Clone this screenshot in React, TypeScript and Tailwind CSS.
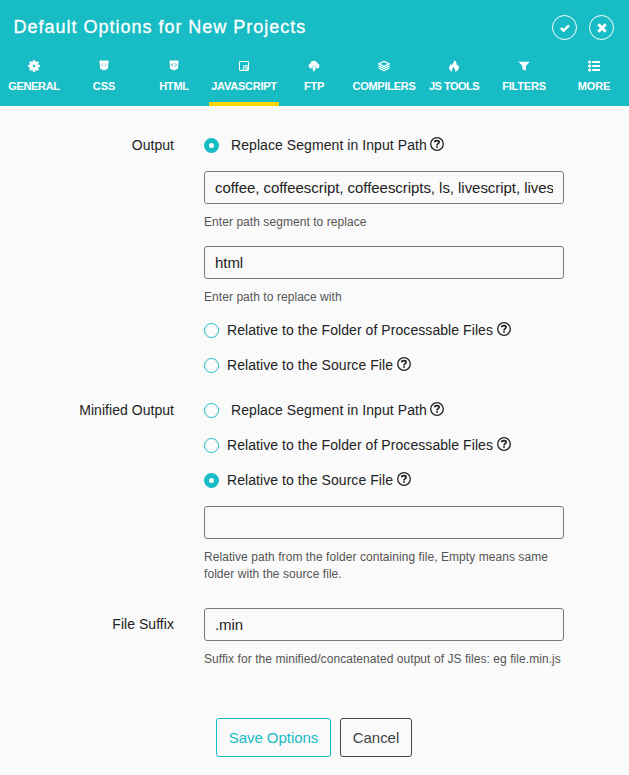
import type { ReactNode } from "react";

const Svg = ({ children }: { children: ReactNode }) => (
  <svg viewBox="0 0 12 12" className="h-3 w-3" fill="currentColor">
    {children}
  </svg>
);

const Shield = ({ strong }: { strong?: boolean }) => (
  <Svg>
    <path d="M1.500.5h9l-.5 8L6 10.500 2 8.500z" />
    <path
      d="M5 3.300 3.500 5 5 6.700M7 3.300 8.500 5 7 6.700"
      fill="none"
      stroke="#18bcc4"
      strokeWidth={strong ? 0.9 : 0.5}
    />
  </Svg>
);

const tabs: { label: string; icon: ReactNode; active?: boolean; spacing: string }[] = [
  {
    label: "GENERAL",
    spacing: "tracking-[-0.35px]",
    icon: (
      <Svg>
        <path
          d="M6 .2v11.600M.2 6h11.600M1.900 1.900l8.200 8.200M10.100 1.900l-8.200 8.200"
          stroke="currentColor"
          strokeWidth="2.500"
        />
        <circle cx="6" cy="6" r="4.500" />
        <circle cx="6" cy="6" r="1.200" fill="#18bcc4" />
      </Svg>
    ),
  },
  { label: "CSS", icon: <Shield />, spacing: "tracking-[-0.1px]" },
  { label: "HTML", icon: <Shield strong />, spacing: "tracking-[-0.2px]" },
  {
    label: "JAVASCRIPT",
    active: true,
    spacing: "tracking-[-0.25px]",
    icon: (
      <Svg>
        <rect x="1.500" y="1.500" width="9" height="9" rx=".5" fill="none" stroke="currentColor" strokeWidth="1" />
        <path
          d="M5.900 5v3.500q0 .8-.8.8h-.9M9.900 5.500H8.200q-.6 0-.6.900t.6.900h.7q.7 0 .7 1t-.7 1H7.100"
          fill="none"
          stroke="currentColor"
          strokeWidth="1.100"
        />
      </Svg>
    ),
  },
  {
    label: "FTP",
    spacing: "tracking-[-0.3px]",
    icon: (
      <Svg>
        <path d="M2.900 8.500A2.600 2.600 0 0 1 2.100 3.600a3.900 3.900 0 0 1 7.400-.3 2.650 2.650 0 0 1-.2 5.200z" />
        <path d="M6 5.500 3.400 8.300h1.300V11.300h2.600V8.300h1.300z" stroke="#18bcc4" strokeWidth=".5" />
      </Svg>
    ),
  },
  {
    label: "COMPILERS",
    spacing: "tracking-[-0.27px]",
    icon: (
      <Svg>
        <path
          d="M6 1.400 11.300 3.800 6 6.200.7 3.800zM.5 5.900l5.500 2.500 5.500-2.500M.5 8l5.500 2.500L11.500 8"
          fill="none"
          stroke="currentColor"
          strokeWidth="1.250"
        />
      </Svg>
    ),
  },
  {
    label: "JS TOOLS",
    spacing: "tracking-[-0.5px]",
    icon: (
      <Svg>
        <path d="M6.300.2c.3 2-2.300 3-2.100 5.200L3 4C1.500 5.600.9 7 1.200 8.500c.3 1.600 1.500 2.700 3 3.200-.9-2 .4-3.400 1.600-4.700.2 1.300 2 2.700 1.400 4.700 3.600-1 4.700-4.500 2.600-7.200-.2.900-.5 1.400-1 1.700C9 3.700 8.400 1.400 6.300.2z" />
      </Svg>
    ),
  },
  {
    label: "FILTERS",
    spacing: "tracking-[-0.2px]",
    icon: (
      <Svg>
        <path d="M.4 1.800h11.200L7.900 6v4.800L4.400 9.300V6z" />
      </Svg>
    ),
  },
  {
    label: "MORE",
    spacing: "tracking-[-0.15px]",
    icon: (
      <Svg>
        <path d="M4.200 1H12v2H4.200zM4.200 5H12v2H4.200zM4.200 9H12v2H4.200z" />
        <circle cx="1.600" cy="2" r="1.600" />
        <circle cx="1.600" cy="6" r="1.600" />
        <circle cx="1.600" cy="10" r="1.600" />
      </Svg>
    ),
  },
];

const Help = () => (
  <svg viewBox="0 0 14 14" className="ml-[3.5px] mt-[9px] h-[14px] w-[14px] shrink-0 self-start" fill="none" stroke="#222">
    <circle cx="7" cy="7" r="6.300" strokeWidth="1.300" />
    <path d="M4.700 5.200C4.800 3.200 9.100 3.200 9.100 5.200 9.100 6.700 7 6.600 7 8.400" strokeWidth="1.700" />
    <path d="M7 9.200v1.600" strokeWidth="1.800" />
  </svg>
);

function Radio({ children, checked, wide }: { children: string; checked?: boolean; wide?: boolean }) {
  return (
    <div className="flex h-[35px] items-center">
      <span
        className={`h-[15px] w-[15px] shrink-0 rounded-full border-[#18bcc4] ${
          checked ? "border-[5px] bg-white" : "border"
        }`}
      />
      <span className={`whitespace-nowrap pb-[2px] text-sm tracking-[0.07px] ${wide ? "ml-3" : "ml-2"}`}>
        {children}
      </span>
      <Help />
    </div>
  );
}

const Field = ({ value }: { value: string }) => (
  <input
    readOnly
    defaultValue={value}
    className="block h-[33px] w-[360px] rounded-[3px] border border-[#7b7b7b] bg-transparent px-[10px] text-[15px] tracking-[-0.05px] text-[#222] outline-none"
  />
);

const Hint = ({ children }: { children: ReactNode }) => (
  <p className="whitespace-nowrap text-xs leading-[17px] tracking-[0.06px] text-[#555]">{children}</p>
);

const Label = ({ children }: { children: string }) => (
  <div className="w-[174px] shrink-0 text-right text-sm leading-[35px] tracking-[0.04px]">{children}</div>
);

export default function App() {
  return (
    <main className="h-[775px] w-[629px] overflow-hidden bg-[#fafafa] font-['Liberation_Sans',Arial,sans-serif] text-[#222]">
      <header className="h-[106px] overflow-hidden bg-[#18bcc4] text-white">
        <div className="flex h-[55px] items-center justify-between pl-[13.5px] pr-[15px]">
          <h1 className="whitespace-nowrap pb-[2px] text-lg tracking-[0.99px] [-webkit-text-stroke:0.3px_white]">
            Default Options for New Projects
          </h1>
          <div className="flex gap-3">
            <button className="flex h-[25px] w-[25px] items-center justify-center rounded-full border border-white">
              <svg viewBox="0 0 10 10" className="h-[10px] w-[10px]" fill="none" stroke="white" strokeWidth="2.500">
                <path d="M.9 5 3.700 7.600 9 2.300" />
              </svg>
            </button>
            <button className="flex h-[25px] w-[25px] items-center justify-center rounded-full border border-white">
              <svg viewBox="0 0 10 10" className="h-[10px] w-[10px]" stroke="white" strokeWidth="3">
                <path d="M1.300 1.300l7.400 7.400M8.700 1.300 1.300 8.700" />
              </svg>
            </button>
          </div>
        </div>
        <nav className="-ml-px flex h-[51px] w-[630px]">
          {tabs.map((t) => (
            <div
              key={t.label}
              className={`flex w-[70px] flex-col items-center border-b-4 pt-[5px] ${
                t.active ? "border-[#ffd600]" : "border-transparent"
              }`}
            >
              <span className="flex h-3 items-center">{t.icon}</span>
              <span className={`mt-[7px] whitespace-nowrap text-[11px] font-bold leading-[14px] ${t.spacing}`}>
                {t.label}
              </span>
            </div>
          ))}
        </nav>
      </header>

      <section className="flex pt-[22px]">
        <Label>Output</Label>
        <div className="ml-[30px]">
          <Radio checked wide>Replace Segment in Input Path</Radio>
          <div className="pt-2">
            <Field value="coffee, coffeescript, coffeescripts, ls, livescript, livescripts" />
          </div>
          <div className="pt-[10px]">
            <Hint>Enter path segment to replace</Hint>
          </div>
          <div className="pt-[15px]">
            <Field value="html" />
          </div>
          <div className="pb-[7px] pt-[10px]">
            <Hint>Enter path to replace with</Hint>
          </div>
          <Radio>Relative to the Folder of Processable Files</Radio>
          <Radio>Relative to the Source File</Radio>
        </div>
      </section>

      <section className="flex pt-[10px]">
        <Label>Minified Output</Label>
        <div className="ml-[30px]">
          <Radio wide>Replace Segment in Input Path</Radio>
          <Radio>Relative to the Folder of Processable Files</Radio>
          <Radio checked>Relative to the Source File</Radio>
          <div className="pb-[10px] pt-2">
            <Field value="" />
          </div>
          <Hint>
            Relative path from the folder containing file, Empty means same
            <br />
            folder with the source file.
          </Hint>
        </div>
      </section>

      <section className="flex pt-[25px]">
        <div className="-mt-px">
          <Label>File Suffix</Label>
        </div>
        <div className="ml-[30px]">
          <Field value=".min" />
          <div className="pt-[10px]">
            <Hint>Suffix for the minified/concatenated output of JS files: eg file.min.js</Hint>
          </div>
        </div>
      </section>

      <footer className="flex gap-[9px] pl-[216px] pt-[50px] text-[15px] tracking-[-0.05px]">
        <button className="h-[39px] w-[115px] whitespace-nowrap rounded-[3px] border border-[#18bcc4] pt-[2px] text-[#18bcc4]">
          Save Options
        </button>
        <button className="h-[39px] w-[72px] rounded-[3px] border border-[#444] pt-[2px] text-[#444]">Cancel</button>
      </footer>
    </main>
  );
}
